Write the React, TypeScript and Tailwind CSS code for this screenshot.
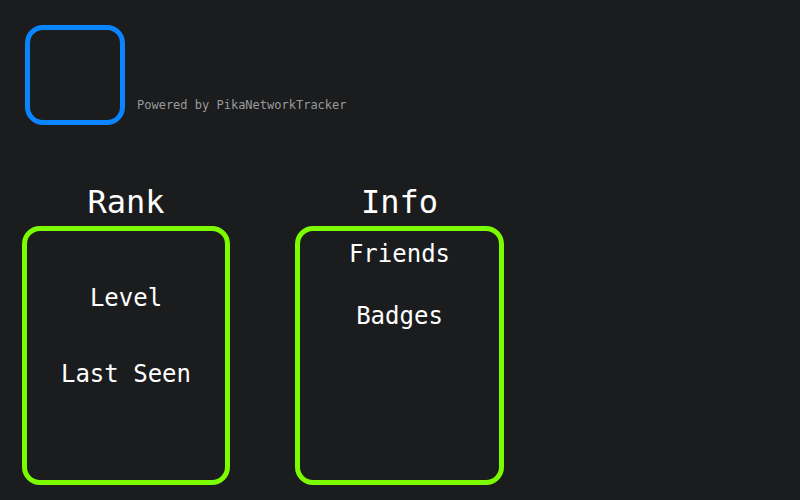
import React from 'react';

const App: React.FC = () => {
    return (
        <div className="min-h-screen w-full bg-[#1b1c1e] font-['DejaVu_Sans_Mono',monospace] text-white">
            {/* Header */}
            <div className="flex gap-3 pl-[25px] pt-[25px]">
                <div className="h-[100px] w-[100px] rounded-[18px] border-[5px] border-[#0a84ff]" />
                <p className="mb-[13px] self-end text-[12px] leading-[14px] text-[#9a9a9a]">
                    Powered by PikaNetworkTracker
                </p>
            </div>

            {/* Cards */}
            <div className="mt-[57px] flex gap-[65px] pl-[22px]">
                <div className="flex w-[208px] flex-col items-center">
                    <h2 className="text-[32px] leading-[40px]">Rank</h2>
                    <div className="mt-[4px] flex h-[259px] w-full flex-col items-center rounded-[18px] border-[5px] border-[#7cfc00] pt-[52px] text-[24px] leading-[30px]">
                        <p>Level</p>
                        <p className="mt-[46px]">Last Seen</p>
                    </div>
                </div>

                <div className="flex w-[209px] flex-col items-center">
                    <h2 className="text-[32px] leading-[40px]">Info</h2>
                    <div className="mt-[4px] flex h-[259px] w-full flex-col items-center rounded-[18px] border-[5px] border-[#7cfc00] pt-[8px] text-[24px] leading-[30px]">
                        <p>Friends</p>
                        <p className="mt-[32px]">Badges</p>
                    </div>
                </div>
            </div>
        </div>
    );
};

export default App;
